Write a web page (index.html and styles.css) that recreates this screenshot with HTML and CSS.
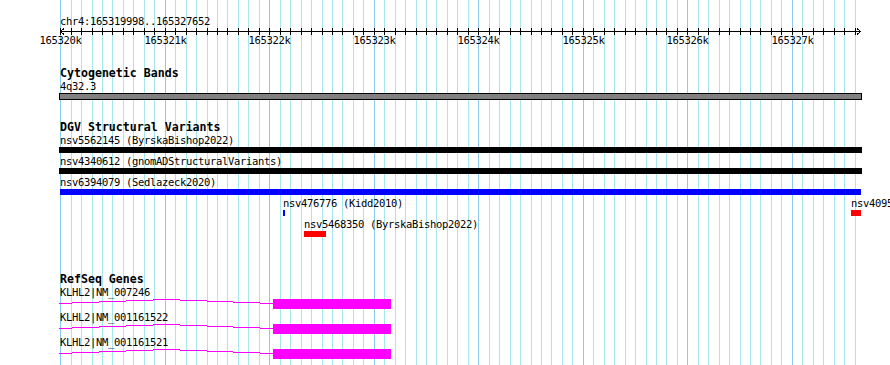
FILE: index.html
```html
<!DOCTYPE html>
<html lang="en">
<head>
<meta charset="utf-8">
<title>chr4:165319998..165327652</title>
<link rel="stylesheet" href="styles.css">
</head>
<body>
<div class="browser">
  <svg class="grid" width="890" height="365" viewBox="0 0 890 365" aria-hidden="true">
    <path class="grid-minor" d="M71.5 0V365M81.5 0V365M92.5 0V365M102.5 0V365M112.5 0V365M123.5 0V365M133.5 0V365M144.5 0V365M154.5 0V365M175.5 0V365M186.5 0V365M196.5 0V365M207.5 0V365M217.5 0V365M227.5 0V365M238.5 0V365M248.5 0V365M259.5 0V365M280.5 0V365M290.5 0V365M301.5 0V365M311.5 0V365M322.5 0V365M332.5 0V365M342.5 0V365M353.5 0V365M363.5 0V365M384.5 0V365M395.5 0V365M405.5 0V365M416.5 0V365M426.5 0V365M436.5 0V365M447.5 0V365M457.5 0V365M468.5 0V365M489.5 0V365M499.5 0V365M510.5 0V365M520.5 0V365M531.5 0V365M541.5 0V365M551.5 0V365M562.5 0V365M572.5 0V365M593.5 0V365M604.5 0V365M614.5 0V365M625.5 0V365M635.5 0V365M646.5 0V365M656.5 0V365M666.5 0V365M677.5 0V365M698.5 0V365M708.5 0V365M719.5 0V365M729.5 0V365M740.5 0V365M750.5 0V365M760.5 0V365M771.5 0V365M781.5 0V365M802.5 0V365M813.5 0V365M823.5 0V365M834.5 0V365M844.5 0V365M855.5 0V365"/>
    <path class="grid-major" d="M60.5 0V365M165.5 0V365M269.5 0V365M374.5 0V365M478.5 0V365M583.5 0V365M687.5 0V365M792.5 0V365"/>
  </svg>

  <svg class="ruler" width="890" height="50" viewBox="0 0 890 50">
    <text class="ruler-title" x="60" y="25">chr4:165319998..165327652</text>
    <path class="axis" d="M60 31.5H861"/>
    <path class="axis" d="M64 28.5L60.5 31.5L64 34.5"/>
    <path class="axis" d="M857 28.5L860.5 31.5L857 34.5"/>
    <path class="axis" d="M60.5 28v7M71.5 28v7M81.5 28v7M92.5 28v7M102.5 28v7M112.5 28v7M123.5 28v7M133.5 28v7M144.5 28v7M154.5 28v7M165.5 28v7M175.5 28v7M186.5 28v7M196.5 28v7M207.5 28v7M217.5 28v7M227.5 28v7M238.5 28v7M248.5 28v7M259.5 28v7M269.5 28v7M280.5 28v7M290.5 28v7M301.5 28v7M311.5 28v7M322.5 28v7M332.5 28v7M342.5 28v7M353.5 28v7M363.5 28v7M374.5 28v7M384.5 28v7M395.5 28v7M405.5 28v7M416.5 28v7M426.5 28v7M436.5 28v7M447.5 28v7M457.5 28v7M468.5 28v7M478.5 28v7M489.5 28v7M499.5 28v7M510.5 28v7M520.5 28v7M531.5 28v7M541.5 28v7M551.5 28v7M562.5 28v7M572.5 28v7M583.5 28v7M593.5 28v7M604.5 28v7M614.5 28v7M625.5 28v7M635.5 28v7M646.5 28v7M656.5 28v7M666.5 28v7M677.5 28v7M687.5 28v7M698.5 28v7M708.5 28v7M719.5 28v7M729.5 28v7M740.5 28v7M750.5 28v7M760.5 28v7M771.5 28v7M781.5 28v7M792.5 28v7M802.5 28v7M813.5 28v7M823.5 28v7M834.5 28v7M844.5 28v7M855.5 28v7"/>
    <text class="tick-label" x="60.5" y="44">165320k</text>
    <text class="tick-label" x="165.5" y="44">165321k</text>
    <text class="tick-label" x="269.5" y="44">165322k</text>
    <text class="tick-label" x="374.5" y="44">165323k</text>
    <text class="tick-label" x="478.5" y="44">165324k</text>
    <text class="tick-label" x="583.5" y="44">165325k</text>
    <text class="tick-label" x="687.5" y="44">165326k</text>
    <text class="tick-label" x="792.5" y="44">165327k</text>
  </svg>

  <section class="track track-cyto">
    <h2 class="track-title">Cytogenetic Bands</h2>
    <div class="label">4q32.3</div>
    <div class="band"></div>
  </section>

  <section class="track track-dgv">
    <h2 class="track-title">DGV Structural Variants</h2>
    <div class="row">
      <div class="label">nsv5562145 (ByrskaBishop2022)</div>
      <div class="bar bar-black"></div>
    </div>
    <div class="row">
      <div class="label">nsv4340612 (gnomADStructuralVariants)</div>
      <div class="bar bar-black"></div>
    </div>
    <div class="row">
      <div class="label">nsv6394079 (Sedlazeck2020)</div>
      <div class="bar bar-blue"></div>
    </div>
    <div class="row row-free">
      <div class="feat" style="left:223px">
        <div class="label">nsv476776 (Kidd2010)</div>
        <div class="bar bar-blue-small" style="width:2px"></div>
      </div>
      <div class="feat feat-edge" style="left:791px">
        <div class="label">nsv4095</div>
        <div class="bar bar-red" style="width:10px"></div>
      </div>
    </div>
    <div class="row row-free">
      <div class="feat" style="left:244px">
        <div class="label">nsv5468350 (ByrskaBishop2022)</div>
        <div class="bar bar-red" style="width:22px"></div>
      </div>
    </div>
  </section>

  <section class="track track-genes">
    <h2 class="track-title">RefSeq Genes</h2>
    <div class="gene-row">
      <div class="label">KLHL2|NM_007246</div>
      <svg class="gene" width="830" height="10" viewBox="0 0 830 10">
        <polyline class="intron" points="-1,4.5 106.5,0.5 213,4.5"/>
        <rect class="exon" x="213" y="0" width="118" height="10"/>
      </svg>
    </div>
    <div class="gene-row">
      <div class="label">KLHL2|NM_001161522</div>
      <svg class="gene" width="830" height="10" viewBox="0 0 830 10">
        <polyline class="intron" points="-1,4.5 106.5,0.5 213,4.5"/>
        <rect class="exon" x="213" y="0" width="118" height="10"/>
      </svg>
    </div>
    <div class="gene-row">
      <div class="label">KLHL2|NM_001161521</div>
      <svg class="gene" width="830" height="10" viewBox="0 0 830 10">
        <polyline class="intron" points="-1,4.5 106.5,0.5 213,4.5"/>
        <rect class="exon" x="213" y="0" width="118" height="10"/>
      </svg>
    </div>
  </section>
</div>
</body>
</html>
```

FILE: styles.css
```css
* {
  box-sizing: border-box;
  margin: 0;
  padding: 0;
}

body {
  margin: 0;
  background: #ffffff;
}

.browser {
  position: relative;
  width: 890px;
  height: 365px;
  overflow: hidden;
  background: #ffffff;
  color: #000000;
  font-family: "DejaVu Sans Mono", "Liberation Mono", monospace;
  font-size: 10.5px;
  letter-spacing: -0.32px;
}

.grid {
  position: absolute;
  top: 0;
  left: 0;
  z-index: 0;
  shape-rendering: crispEdges;
}

.grid-minor {
  fill: none;
  stroke: #a8e6ee;
  stroke-width: 1;
}

.grid-major {
  fill: none;
  stroke: #8ccaf0;
  stroke-width: 1;
}

.ruler {
  position: relative;
  z-index: 1;
  display: block;
}

.ruler text {
  font-family: "DejaVu Sans Mono", "Liberation Mono", monospace;
  font-size: 10.5px;
  letter-spacing: -0.32px;
  fill: #000000;
}

.ruler .tick-label {
  text-anchor: middle;
}

.axis {
  fill: none;
  stroke: #000000;
  stroke-width: 1;
  shape-rendering: crispEdges;
}

.track {
  position: relative;
  z-index: 1;
  margin-left: 60px;
  width: 830px;
}

.track-cyto {
  margin-top: 17px;
}

.track-dgv {
  margin-top: 21px;
}

.track-genes {
  margin-top: 34px;
}

.track-title {
  font-size: 11.6px;
  font-weight: bold;
  letter-spacing: 0;
  line-height: 13px;
  height: 13px;
  white-space: nowrap;
}

.label {
  line-height: 12px;
  height: 12px;
  white-space: nowrap;
}

.band {
  margin-top: 1px;
  margin-left: -1px;
  width: 803px;
  height: 7px;
  background: #808080;
  border: 1px solid #000000;
}

.row {
  height: 21px;
}

.row-free {
  position: relative;
}

.feat {
  position: absolute;
  top: 0;
}

.feat-edge {
  width: 39px;
  overflow: hidden;
}

.bar {
  margin-top: 1px;
  height: 6px;
}

.bar-black {
  margin-left: -1px;
  width: 803px;
  background: #000000;
}

.bar-blue {
  width: 801px;
  background: #0000ff;
}

.bar-blue-small {
  background: #0000ff;
}

.bar-red {
  background: #ff0000;
}

.gene-row {
  height: 25px;
}

.gene {
  display: block;
  margin-top: 1px;
  overflow: visible;
  shape-rendering: crispEdges;
}

.intron {
  fill: none;
  stroke: #ff00ff;
  stroke-width: 1;
}

.exon {
  fill: #ff00ff;
}
```
